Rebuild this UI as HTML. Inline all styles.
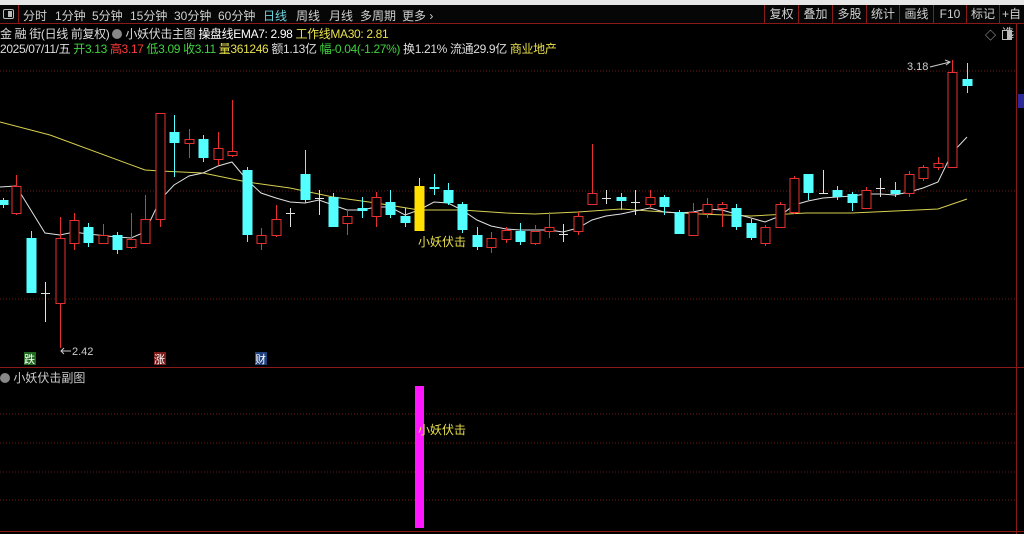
<!DOCTYPE html>
<html><head><meta charset="utf-8">
<style>
*{margin:0;padding:0;box-sizing:border-box}
body{width:1024px;height:534px;background:#000;overflow:hidden;position:relative;font-family:"Liberation Sans","Noto Sans CJK SC",sans-serif;font-size:12px;color:#ddd}
.top{position:absolute;left:0;top:0;width:1024px;height:5px;background:#e6e6e6}
.tb{position:absolute;left:0;top:5px;width:1024px;height:19px;background:#060606;border-bottom:1px solid #8a1a1a}
.tb span{position:absolute;top:2px;color:#cfcfcf;font-size:12px;white-space:nowrap}
.tb .r{position:absolute;top:0;height:19px;border-left:1px solid #8a1a1a;color:#cfcfcf;font-size:12px;line-height:19px;text-align:center}
.t{position:absolute;white-space:nowrap;font-size:12px}
.h{letter-spacing:-0.35px}
</style></head><body>
<div class="top"></div>
<div class="tb">
<div style="position:absolute;left:3px;top:4px;width:11px;height:10px;border:1px solid #bbb;border-radius:2px"><div style="position:absolute;right:1px;top:1px;width:4px;height:6px;background:#bbb"></div></div>
<div style="position:absolute;left:18px;top:0;height:19px;border-left:1px solid #8a1a1a"></div>
<span style="left:23px">分时</span><span style="left:55px">1分钟</span><span style="left:92px">5分钟</span><span style="left:130px">15分钟</span><span style="left:174px">30分钟</span><span style="left:218px">60分钟</span><span style="left:263px;color:#6fd3e0">日线</span><span style="left:296px">周线</span><span style="left:329px">月线</span><span style="left:360px">多周期</span><span style="left:402px">更多 ›</span>
<div class="r" style="left:764px;width:34px">复权</div><div class="r" style="left:798px;width:34px">叠加</div><div class="r" style="left:832px;width:34px">多股</div><div class="r" style="left:866px;width:33px">统计</div><div class="r" style="left:899px;width:34px">画线</div><div class="r" style="left:933px;width:33px">F10</div><div class="r" style="left:966px;width:33px">标记</div><div class="r" style="left:999px;width:30px;text-align:left;padding-left:2px">+自选</div>
</div>
<div class="t h" style="left:0;top:25px;color:#ddd">金 融 街(日线 前复权) <span style="display:inline-block;width:10px;height:10px;border-radius:5px;background:#888;vertical-align:-1px"></span> 小妖伏击主图 <span style="color:#fff">操盘线EMA7: 2.98</span> <span style="color:#e8e04a">工作线MA30: 2.81</span></div>
<div class="t h" style="left:0;top:40px;color:#ddd">2025/07/11/五 <span style="color:#3fd23f">开3.13</span> <span style="color:#ff3a3a">高3.17</span> <span style="color:#3fd23f">低3.09</span> <span style="color:#3fd23f">收3.11</span> <span style="color:#e8e04a">量361246</span> 额1.13亿 <span style="color:#3fd23f">幅-0.04(-1.27%)</span> 换1.21% 流通29.9亿 <span style="color:#e8e04a">商业地产</span></div>
<div class="t" style="left:985px;top:27px;color:#bbb;font-size:11px">◇</div>
<div style="position:absolute;left:1002px;top:30px;width:10px;height:10px;border:1px solid #bbb;background:#000"><div style="position:absolute;right:0;top:0;width:4px;height:8px;background:#bbb"></div></div>
<svg width="1024" height="534" style="position:absolute;left:0;top:0">
<g stroke="#6a1818" stroke-dasharray="1,2" stroke-width="1">
<line x1="0" y1="71" x2="1016" y2="71"/><line x1="0" y1="191" x2="1016" y2="191"/><line x1="0" y1="299" x2="1016" y2="299"/>
<line x1="0" y1="414" x2="1016" y2="414"/><line x1="0" y1="443" x2="1016" y2="443"/><line x1="0" y1="472" x2="1016" y2="472"/><line x1="0" y1="500" x2="1016" y2="500"/>
</g>
<line x1="0" y1="367.5" x2="1024" y2="367.5" stroke="#8a1a1a"/>
<line x1="0" y1="531.5" x2="1024" y2="531.5" stroke="#8a1a1a"/>
<line x1="1016.5" y1="24" x2="1016.5" y2="534" stroke="#8a1a1a"/>
<rect x="1018" y="94" width="6" height="14" fill="#2a2a9a"/>
<polyline fill="none" stroke="#d8d050" stroke-width="1" points="0,122 50,135 145,170 160,171 203,173 247,182 290,188 333,197 376,203 419,210 462,210 506,213 535,214 578,212 621,209 664,212 700,214 751,216 806,213 852,213 895,211 938,209 967,199"/>
<polyline fill="none" stroke="#e0e0e0" stroke-width="1" points="0,187 16,186 45,233 60,235 74,232 88,234 117,237 131,238 145,232 160,200 174,185 189,176 203,173 218,166 232,162 247,180 261,193 276,198 290,202 305,203 319,200 333,205 347,210 362,210 376,207 390,207 405,215 419,210 434,202 448,203 462,210 477,220 491,226 506,229 520,230 535,230 549,230 563,232 578,228 592,220 606,216 621,214 635,211 650,208 664,212 679,213 693,212 707,209 722,210 736,214 751,218 765,222 780,216 794,205 808,201 823,198 837,197 852,196 866,194 880,194 895,195 909,192 923,188 938,182 952,153 967,137"/>
<text x="907" y="70" fill="#ccc" font-size="11" font-family="Liberation Sans">3.18</text>
<line x1="930" y1="67" x2="950" y2="62" stroke="#ccc"/><path d="M945,60 L950,62 L946,65" fill="none" stroke="#ccc"/>
<text x="72" y="355" fill="#ccc" font-size="11" font-family="Liberation Sans">2.42</text>
<line x1="61" y1="351" x2="71" y2="351" stroke="#ccc"/><path d="M64,348 L61,351 L64,354" fill="none" stroke="#ccc"/>
<rect x="24" y="352" width="12" height="13" fill="#1f6a1f"/>
<rect x="154" y="352" width="12" height="13" fill="#7a1a1a"/>
<rect x="255" y="352" width="12" height="13" fill="#1f3f7a"/>
<rect x="415" y="386" width="9" height="142" fill="#ff18ff"/>
</svg>
<div class="t" style="left:24px;top:351px;color:#fff;font-size:11px">跌</div>
<div class="t" style="left:154px;top:351px;color:#fff;font-size:11px">涨</div>
<div class="t" style="left:255px;top:351px;color:#fff;font-size:11px">财</div>
<div class="t" style="left:418px;top:233px;color:#e8e04a">小妖伏击</div>
<div class="t" style="left:418px;top:421px;color:#e8e04a">小妖伏击</div>
<div class="t" style="left:0;top:369px;color:#ccc"><span style="display:inline-block;width:10px;height:10px;border-radius:5px;background:#888;vertical-align:-1px"></span> 小妖伏击副图</div>
<svg width="1024" height="534" style="position:absolute;left:0;top:0">
<g id="k"></g>
</svg>
<script>
var d=[
[3,'c',200,205,198,208],[16,'r',186,213,175,215],[31,'c',238,293,231,293],[45,'w',293,293,282,322],[60,'r',238,303,217,348],[74,'r',220,243,213,250],[88,'c',227,243,223,247],[103,'r',235,243,224,244],[117,'c',235,250,232,254],[131,'r',239,247,213,249],[145,'r',219,243,195,244],[160,'r',113,219,113,227],[174,'c',132,143,115,177],[189,'r',139,143,129,158],[203,'c',139,158,135,162],[218,'r',148,159,132,165],[232,'r',151,155,100,157],[247,'c',170,235,167,242],[261,'r',235,243,228,250],[276,'r',219,235,205,237],[290,'w',213,213,208,227],[305,'c',174,200,150,203],[319,'w',198,198,190,215],[333,'c',197,227,193,227],[347,'r',216,223,210,235],[362,'c',208,211,197,218],[376,'r',197,216,192,227],[390,'c',202,215,190,218],[405,'c',216,223,208,227],[419,'y',186,231,178,231],[434,'c',187,189,174,195],[448,'c',190,203,183,205],[462,'c',204,230,202,233],[477,'c',235,247,227,250],[491,'r',238,247,232,253],[506,'r',230,239,227,243],[520,'c',231,242,223,245],[535,'r',231,243,225,245],[549,'r',227,231,212,238],[563,'w',234,234,224,242],[578,'r',216,231,212,235],[592,'r',193,204,144,205],[606,'w',198,198,190,204],[621,'c',197,201,193,210],[635,'w',202,202,190,215],[650,'r',197,204,190,207],[664,'c',197,207,195,215],[679,'c',212,234,210,234],[693,'r',212,235,203,235],[707,'r',204,213,198,218],[722,'r',204,208,202,227],[736,'c',208,227,204,230],[751,'c',223,238,219,240],[765,'r',227,243,225,246],[780,'r',204,227,202,228],[794,'r',178,212,176,214],[808,'c',174,193,174,200],[823,'w',193,193,170,193],[837,'c',190,197,186,200],[852,'c',194,203,192,211],[866,'r',190,208,187,209],[880,'w',188,188,178,197],[895,'c',190,194,182,197],[909,'r',174,193,171,197],[923,'r',167,178,165,181],[938,'r',163,167,157,170],[952,'r',72,167,60,167],[967,'c',79,86,63,93]];
var s='',C={r:'#e83030',c:'#54ffff',w:'#e0e0e0',y:'#ffe000'};
d.forEach(function(a){var x=a[0],t=a[1],col=C[t];
s+='<line x1="'+(x+.5)+'" y1="'+a[4]+'" x2="'+(x+.5)+'" y2="'+a[5]+'" stroke="'+col+'"/>';
if(t=='w'){s+='<line x1="'+(x-4)+'" y1="'+(a[2]+.5)+'" x2="'+(x+5)+'" y2="'+(a[2]+.5)+'" stroke="'+col+'"/>';}
else if(t=='r'){s+='<rect x="'+(x-4)+'" y="'+(a[2]+.5)+'" width="9" height="'+Math.max(1,a[3]-a[2])+'" fill="#000" stroke="'+col+'"/>';}
else{s+='<rect x="'+(x-4.5)+'" y="'+a[2]+'" width="10" height="'+Math.max(2,a[3]-a[2])+'" fill="'+col+'"/>';}
});
document.getElementById('k').innerHTML=s;
</script>
</body></html>
